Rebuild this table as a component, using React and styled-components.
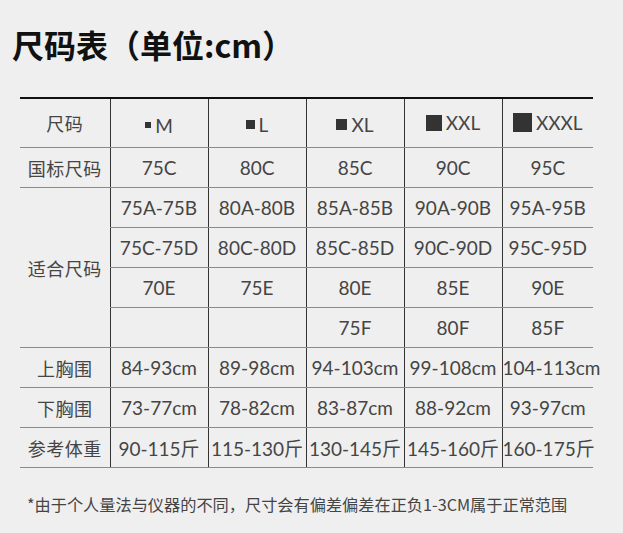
import React from "react";
import styled, { createGlobalStyle } from "styled-components";

const Global = createGlobalStyle`
  html, body { margin: 0; padding: 0; background: #efefef; }
  body { font-family: "Lato", "Noto Sans CJK SC", sans-serif; }
`;

const Page = styled.div`
  width: 623px;
  height: 533px;
  background: #efefef;
  padding-top: 24px;
  box-sizing: border-box;
  overflow: hidden;
`;

const Title = styled.h1`
  margin: 0 0 0 12px;
  font-family: "Noto Sans CJK SC", sans-serif;
  font-size: 32px;
  line-height: 40px;
  font-weight: 700;
  color: #111;
`;

const Table = styled.table`
  margin: 33px 0 0 20px;
  width: 573px;
  border-collapse: collapse;
  table-layout: fixed;
  border-top: 2.5px solid #111;
  color: #454545;
`;

const Cell = styled.td`
  height: ${(p) => (p.$head ? 48 : 39)}px;
  padding: 0;
  text-align: center;
  vertical-align: middle;
  font-family: ${(p) =>
    p.$label ? '"Noto Sans CJK SC", sans-serif' : '"Lato", "Noto Sans CJK SC", sans-serif'};
  font-size: ${(p) => (p.$label ? 18 : 19)}px;
  font-weight: 400;
  white-space: nowrap;
  letter-spacing: ${(p) => (p.$label ? "0.5px" : "0px")};
  border-bottom: 1.5px solid #8a8a8a;
  border-left: ${(p) => (p.$first ? "none" : "1.5px solid #333")};
`;

const SizeLabel = styled.span`
  display: inline-flex;
  align-items: center;
  gap: 4px;
`;

const Square = styled.span`
  display: inline-block;
  width: ${(p) => p.$s}px;
  height: ${(p) => p.$s}px;
  background: #333;
`;

const Note = styled.p`
  margin: 24px 0 0 27px;
  font-family: "Noto Sans CJK SC", sans-serif;
  font-size: 16.2px;
  font-weight: 400;
  color: #444;
  white-space: nowrap;
`;

const sizes = [
  ["M", 6],
  ["L", 9],
  ["XL", 11],
  ["XXL", 16],
  ["XXXL", 19],
];

const rows = [
  { label: "国标尺码", vals: ["75C", "80C", "85C", "90C", "95C"] },
];

const fitRows = [
  ["75A-75B", "80A-80B", "85A-85B", "90A-90B", "95A-95B"],
  ["75C-75D", "80C-80D", "85C-85D", "90C-90D", "95C-95D"],
  ["70E", "75E", "80E", "85E", "90E"],
  ["", "", "75F", "80F", "85F"],
];

const tailRows = [
  { label: "上胸围", vals: ["84-93cm", "89-98cm", "94-103cm", "99-108cm", "104-113cm"] },
  { label: "下胸围", vals: ["73-77cm", "78-82cm", "83-87cm", "88-92cm", "93-97cm"] },
  { label: "参考体重", vals: ["90-115斤", "115-130斤", "130-145斤", "145-160斤", "160-175斤"] },
];

export default function App() {
  return (
    <Page>
      <Global />
      <Title>尺码表（单位:cm）</Title>
      <Table>
        <colgroup>
          <col style={{ width: 90 }} />
          <col style={{ width: 98 }} />
          <col style={{ width: 98 }} />
          <col style={{ width: 98 }} />
          <col style={{ width: 98 }} />
          <col style={{ width: 91 }} />
        </colgroup>
        <tbody>
          <tr>
            <Cell $head $label $first>尺码</Cell>
            {sizes.map(([n, s]) => (
              <Cell $head key={n}>
                <SizeLabel>
                  <Square $s={s} />
                  {n}
                </SizeLabel>
              </Cell>
            ))}
          </tr>
          {rows.map((r) => (
            <tr key={r.label}>
              <Cell $label $first>{r.label}</Cell>
              {r.vals.map((v, i) => (
                <Cell key={i}>{v}</Cell>
              ))}
            </tr>
          ))}
          {fitRows.map((vals, ri) => (
            <tr key={"f" + ri}>
              {ri === 0 && (
                <Cell $label $first rowSpan={4}>适合尺码</Cell>
              )}
              {vals.map((v, i) => (
                <Cell key={i}>{v}</Cell>
              ))}
            </tr>
          ))}
          {tailRows.map((r) => (
            <tr key={r.label}>
              <Cell $label $first>{r.label}</Cell>
              {r.vals.map((v, i) => (
                <Cell key={i}>{v}</Cell>
              ))}
            </tr>
          ))}
        </tbody>
      </Table>
      <Note>*由于个人量法与仪器的不同，尺寸会有偏差偏差在正负1-3CM属于正常范围</Note>
    </Page>
  );
}
